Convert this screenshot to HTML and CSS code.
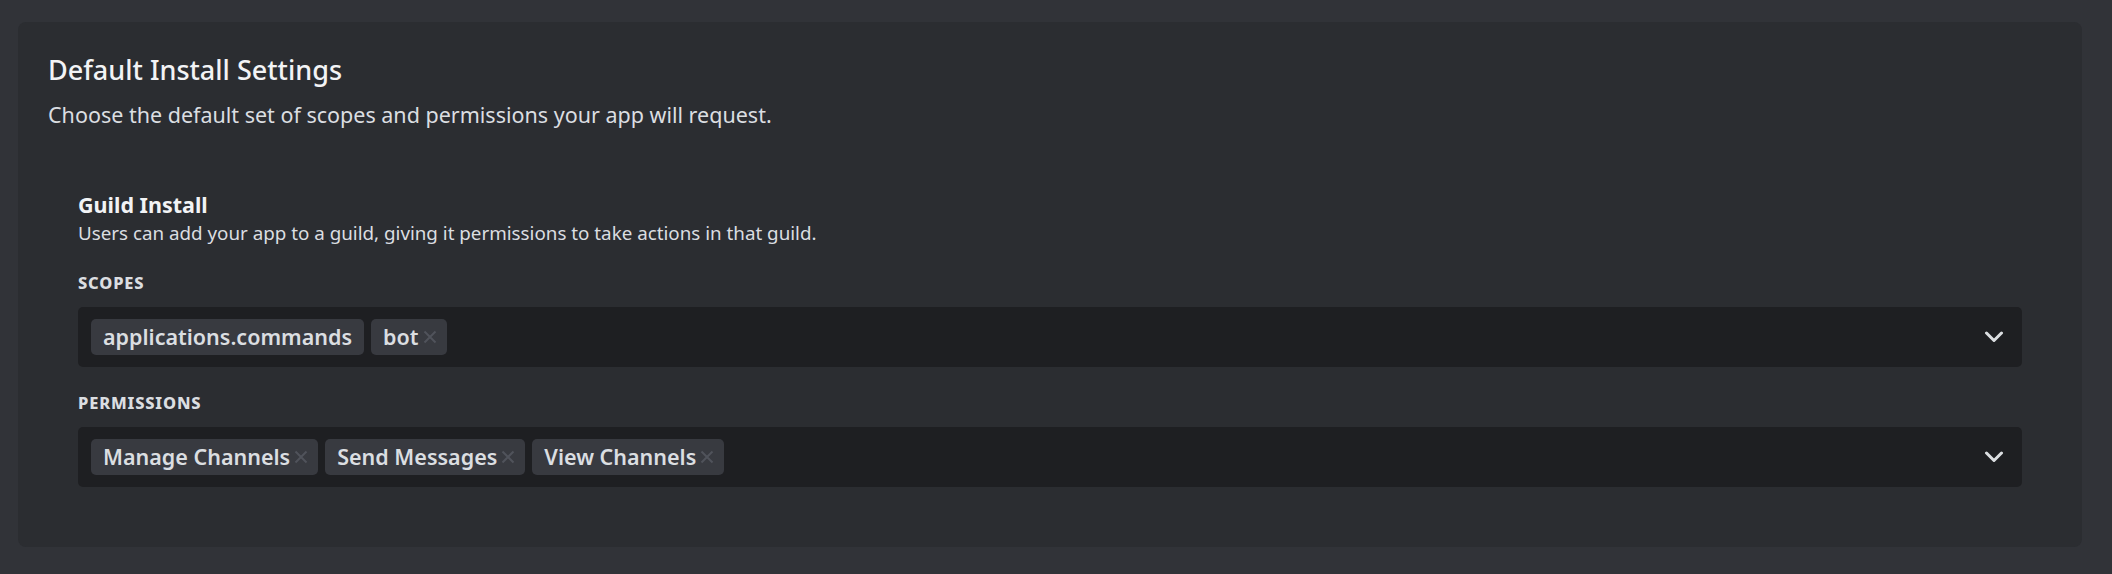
FILE: index.html
```html
<!DOCTYPE html>
<html lang="en">
<head>
<meta charset="utf-8">
<title>Default Install Settings</title>
<link rel="stylesheet" href="styles.css">
</head>
<body>
<main class="page">
  <section class="card">
    <h2 class="card-title">Default Install Settings</h2>
    <p class="card-subtitle">Choose the default set of scopes and permissions your app will request.</p>

    <div class="install">
      <h3 class="install-title">Guild Install</h3>
      <p class="install-desc">Users can add your app to a guild, giving it permissions to take actions in that guild.</p>

      <div class="field">
        <div class="field-label">Scopes</div>
        <div class="select">
          <div class="tags">
            <span class="tag">applications.commands</span>
            <span class="tag">bot<svg class="tag-x" viewBox="0 0 14 14" width="14" height="14"><path d="M1.5 1.5L12.5 12.5M12.5 1.5L1.5 12.5"/></svg></span>
          </div>
          <svg class="chevron" viewBox="0 0 20 12" width="20" height="12"><polyline points="2.5,2 10,9.5 17.5,2"/></svg>
        </div>
      </div>

      <div class="field">
        <div class="field-label">Permissions</div>
        <div class="select">
          <div class="tags">
            <span class="tag">Manage Channels<svg class="tag-x" viewBox="0 0 14 14" width="14" height="14"><path d="M1.5 1.5L12.5 12.5M12.5 1.5L1.5 12.5"/></svg></span>
            <span class="tag">Send Messages<svg class="tag-x" viewBox="0 0 14 14" width="14" height="14"><path d="M1.5 1.5L12.5 12.5M12.5 1.5L1.5 12.5"/></svg></span>
            <span class="tag">View Channels<svg class="tag-x" viewBox="0 0 14 14" width="14" height="14"><path d="M1.5 1.5L12.5 12.5M12.5 1.5L1.5 12.5"/></svg></span>
          </div>
          <svg class="chevron" viewBox="0 0 20 12" width="20" height="12"><polyline points="2.5,2 10,9.5 17.5,2"/></svg>
        </div>
      </div>
    </div>
  </section>
</main>
</body>
</html>
```

FILE: styles.css
```css
* { box-sizing: border-box; }

html, body {
  margin: 0;
  padding: 0;
  background: #313338;
  font-family: "Noto Sans", "Open Sans", sans-serif;
  color: #dbdee1;
}

.page {
  padding: 22px 30px 27px 18px;
}

.card {
  background: #2b2d31;
  border-radius: 8px;
  padding: 32px 30px 30px 30px;
}

.card-title {
  margin: 0;
  font-size: 27px;
  line-height: 32px;
  font-weight: 500;
  color: #f2f3f5;
}

.card-subtitle {
  margin: 15px 0 0 0;
  font-size: 21.5px;
  line-height: 28px;
  font-weight: 400;
  color: #dbdee1;
}

.install {
  padding: 63px 30px 30px 30px;
}

.install-title {
  margin: 0;
  font-size: 21.5px;
  line-height: 26px;
  font-weight: 700;
  color: #f2f3f5;
}

.install-desc {
  margin: 3px 0 0 0;
  font-size: 18.8px;
  line-height: 24px;
  color: #dbdee1;
}

.field {
  margin-top: 27px;
}

.field + .field {
  margin-top: 25px;
}

.field-label {
  font-size: 16.5px;
  line-height: 21px;
  font-weight: 800;
  text-transform: uppercase;
  letter-spacing: 0.05em;
  color: #dbdee1;
  margin-bottom: 14px;
}

.select {
  height: 60px;
  background: #1e1f22;
  border-radius: 5px;
  display: flex;
  align-items: center;
  justify-content: space-between;
  padding: 0 18px 0 13px;
}

.tags {
  display: flex;
  gap: 7px;
}

.tag {
  display: inline-flex;
  align-items: center;
  height: 36px;
  padding: 0 10px 0 12px;
  background: #383a40;
  border-radius: 5px;
  font-size: 21.5px;
  line-height: 36px;
  font-weight: 600;
  color: #dbdee1;
}

.tag:first-child:not(:has(.tag-x)) {
  padding-right: 12px;
}

.tag-x {
  margin-left: 4px;
  fill: none;
  stroke: #50535b;
  stroke-width: 2;
}

.chevron {
  fill: none;
  stroke: #dbdee1;
  stroke-width: 3;
  stroke-linecap: round;
  stroke-linejoin: round;
}
```
